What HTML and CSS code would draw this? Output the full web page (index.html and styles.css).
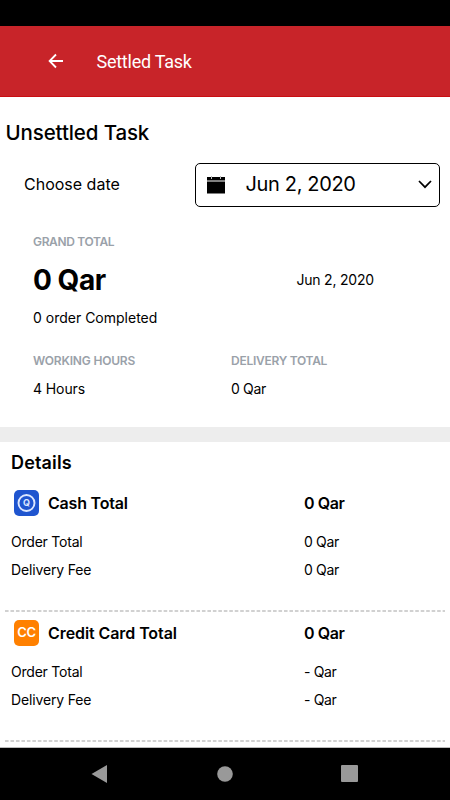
FILE: index.html
```html
<!DOCTYPE html>
<html lang="en">
<head>
<meta charset="utf-8">
<title>Settled Task</title>
<link rel="stylesheet" href="styles.css">
</head>
<body>
<div class="status"></div>
<header class="appbar">
  <svg class="back" width="16" height="16" viewBox="0 0 16 16"><path d="M15 8H2M8 1.5L1.6 8L8 14.5" fill="none" stroke="#fff" stroke-width="1.8"/></svg>
  <span class="appbar-title">Settled Task</span>
</header>
<main>
  <h1 class="heading"><span>Unsettled Task</span></h1>
  <div class="picker-row">
    <span class="choose">Choose date</span>
    <div class="picker">
      <svg class="calendar" width="18" height="18" viewBox="0 0 18 18"><path d="M0 1H18V4.5H0ZM0 5.4H18V17.5H0Z" fill="#000"/><path d="M4.5 0V3M13.5 0V3" stroke="#bbb" stroke-width="1"/></svg>
      <span class="picked">Jun 2, 2020</span>
      <svg class="chevron" width="14" height="9" viewBox="0 0 14 9"><path d="M1 1L7 7.2L13 1" fill="none" stroke="#000" stroke-width="1.7"/></svg>
    </div>
  </div>
  <section class="summary">
    <div class="label grand">GRAND TOTAL</div>
    <div class="amount-row"><span class="amount">0 Qar</span><span class="day">Jun 2, 2020</span></div>
    <div class="orders"><span>0 order Completed</span></div>
    <div class="stats">
      <div><div class="label working">WORKING HOURS</div><div class="value hours">4 Hours</div></div>
      <div><div class="label delivery">DELIVERY TOTAL</div><div class="value qar">0 Qar</div></div>
    </div>
  </section>
  <div class="divider"></div>
  <h2 class="details">Details</h2>
  <section class="group">
    <div class="row head">
      <svg class="badge" width="25" height="26" viewBox="0 0 25 26"><rect width="25" height="26" rx="5" fill="#1f55cf"/><circle cx="12.5" cy="13" r="8" fill="none" stroke="#dce7ff" stroke-width="1.9"/><text class="coin" x="12.5" y="16.2" text-anchor="middle">Q</text></svg>
      <span class="name cash">Cash Total</span><span class="cell total">0 Qar</span>
    </div>
    <div class="row first"><span class="name order">Order Total</span><span class="cell qar">0 Qar</span></div>
    <div class="row"><span class="name fee">Delivery Fee</span><span class="cell qar">0 Qar</span></div>
  </section>
  <svg class="dashes" width="440" height="2"><path d="M0 1H440" stroke="#c2c2c2" stroke-width="1.7" stroke-dasharray="3.6 1.87"/></svg>
  <section class="group second">
    <div class="row head">
      <svg class="badge" width="25" height="26" viewBox="0 0 25 26"><rect width="25" height="26" rx="5" fill="#ff8000"/><text class="cc" x="12.5" y="17.3" text-anchor="middle">CC</text></svg>
      <span class="name credit">Credit Card Total</span><span class="cell total">0 Qar</span>
    </div>
    <div class="row first"><span class="name order">Order Total</span><span class="cell dash">- Qar</span></div>
    <div class="row"><span class="name fee">Delivery Fee</span><span class="cell dash">- Qar</span></div>
  </section>
  <svg class="dashes" width="440" height="2"><path d="M0 1H440" stroke="#c2c2c2" stroke-width="1.7" stroke-dasharray="3.6 1.87"/></svg>
</main>
<nav class="navbar">
  <svg width="17" height="18" viewBox="0 0 17 18"><path d="M.5 9L16 0V18Z" fill="#999"/></svg>
  <svg width="16" height="16" viewBox="0 0 16 16"><circle cx="8" cy="8" r="7.8" fill="#999"/></svg>
  <svg width="17" height="17" viewBox="0 0 17 17"><rect width="17" height="17" rx="1" fill="#999"/></svg>
</nav>
</body>
</html>
```
FILE: styles.css
```css
* { box-sizing: border-box; }
body {
  margin: 0;
  width: 450px;
  height: 800px;
  overflow: hidden;
  display: flex;
  flex-direction: column;
  background: #fff;
  color: #000;
  font-family: Inter, "Liberation Sans", sans-serif;
  font-size: 14px;
  white-space: nowrap;
}
.status { height: 26px; background: #000; flex: none; }
.appbar {
  height: 71px;
  flex: none;
  display: flex;
  align-items: center;
  padding-left: 48px;
  background: #c82429;
  border-bottom: 1px solid #c90e12;
}
.appbar-title {
  margin-left: 32.5px;
  padding-top: 1px;
  color: #fff;
  font: 400 18px/24px Roboto, sans-serif;
  letter-spacing: -0.25px;
}
main { height: 651px; flex: none; border-bottom: 1px solid #bbb; }
.heading {
  margin: 0;
  padding: 23px 0 0 5.5px;
  font-size: 20.5px;
  line-height: 26px;
  font-weight: 500;
  letter-spacing: -0.12px;
}
.picker-row { display: flex; align-items: center; height: 44px; margin-top: 17px; padding-left: 24px; }
.choose { width: 170.5px; padding-bottom: 3px; font-size: 16px; }
.picker {
  display: flex;
  align-items: center;
  width: 245px;
  height: 44px;
  padding: 0 7px 0 11px;
  border: 1px solid #000;
  border-radius: 5px;
}
.picked { margin-left: 21px; padding-bottom: 2px; font-size: 20px; letter-spacing: -0.35px; }
.chevron { margin: 0 0 2px auto; }
.summary { padding-left: 33px; height: 220px; }
.label { color: #9aa1a9; font-size: 12px; line-height: 20px; font-weight: 600; }
.grand { padding-top: 25px; letter-spacing: -0.35px; }
.working { letter-spacing: -0.2px; }
.delivery { letter-spacing: -0.27px; }
.amount-row { display: flex; align-items: center; height: 36px; margin-top: 10px; }
.amount { width: 263.5px; font-size: 28px; font-weight: 700; letter-spacing: -0.45px; }
.day { padding-bottom: 2px; letter-spacing: -0.22px; }
.orders { line-height: 20px; margin-top: 10px; }
.stats { display: grid; grid-template-columns: 198px 1fr; margin-top: 23px; }
.value { line-height: 20px; margin-top: 8px; }
.hours { letter-spacing: -0.1px; }
.qar, .dash { letter-spacing: -0.35px; }
.divider { height: 15px; background: #ededed; }
.details { margin: 0; padding: 9px 0 0 11px; font-size: 18px; line-height: 24px; font-weight: 600; letter-spacing: 0.15px; }
.group { height: 135px; padding-top: 15px; }
.second { height: 128px; padding-top: 8px; }
.row { display: flex; align-items: center; height: 28px; padding-left: 11px; }
.head { height: 26px; padding-left: 14px; font-size: 16px; font-weight: 600; }
.first { margin-top: 11px; height: 28px; }
.name { width: 293px; }
.head .name { width: 256px; margin-left: 9px; }
.cash { letter-spacing: -0.2px; }
.credit { letter-spacing: -0.08px; }
.total { letter-spacing: -0.4px; }
.order { letter-spacing: -0.22px; }
.fee { letter-spacing: -0.15px; }
.dashes { display: block; margin-left: 5px; }
.coin { font: 700 9px Inter, sans-serif; fill: #dce7ff; }
.cc { font: 600 13px Inter, sans-serif; fill: #fff; letter-spacing: -0.3px; }
.navbar {
  height: 52px;
  flex: none;
  display: flex;
  align-items: center;
  justify-content: space-between;
  padding: 0 92px 1px 91px;
  background: #000;
}
```
